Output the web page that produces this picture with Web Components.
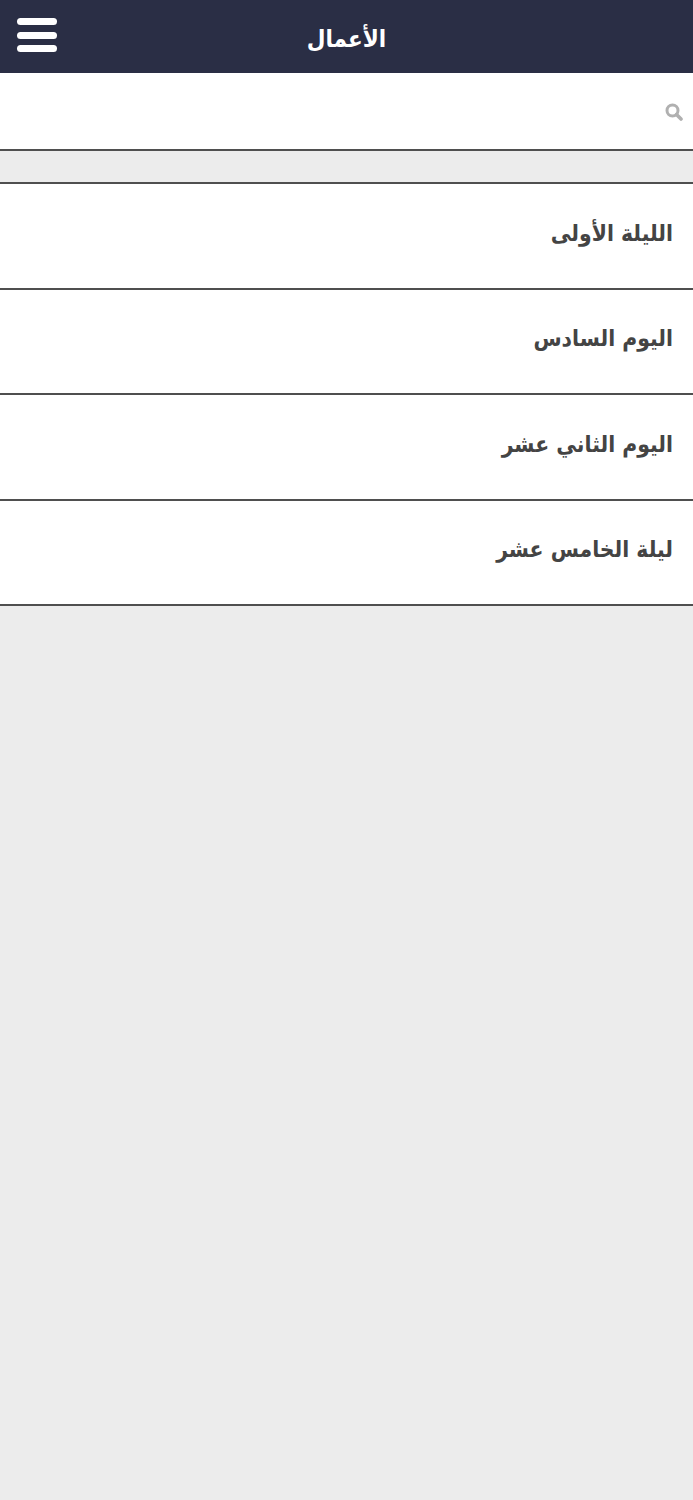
<!DOCTYPE html>
<html lang="ar"><head><meta charset="utf-8"><style>
html,body{margin:0;padding:0;background:#ececec;height:100%}
body{font-family:"DejaVu Sans",sans-serif;min-height:1500px}
</style></head><body>
<app-header title-text="الأعمال"></app-header>
<search-bar></search-bar>
<work-list>
<work-item>الليلة الأولى</work-item>
<work-item>اليوم السادس</work-item>
<work-item>اليوم الثاني عشر</work-item>
<work-item>ليلة الخامس عشر</work-item>
</work-list>
<script>
class AppHeader extends HTMLElement{constructor(){super();this.attachShadow({mode:'open'}).innerHTML=`<style>
:host{display:flex;height:73px;background:#2a2e45;align-items:center;justify-content:center;position:relative;color:#fff}
.t{font:700 24px "DejaVu Sans Condensed","DejaVu Sans",sans-serif;direction:rtl;padding-top:5px}
.m{position:absolute;left:17px;top:18px;width:40px;display:flex;flex-direction:column;gap:6.5px}
.m i{display:block;height:7px;background:#fff;border-radius:3.5px}
</style><div class="m"><i></i><i></i><i></i></div><div class="t">${this.getAttribute('title-text')}</div>`}}
customElements.define('app-header',AppHeader);
class SearchBar extends HTMLElement{constructor(){super();this.attachShadow({mode:'open'}).innerHTML=`<style>
:host{display:flex;height:76px;background:#fff;border-bottom:2px solid #4f4f4f;align-items:center;justify-content:flex-end;padding-right:10px;box-sizing:content-box}
svg{display:block;margin-top:2px}
</style><svg width="18" height="18" viewBox="0 0 18 18"><circle cx="7.5" cy="7.5" r="5.5" fill="none" stroke="#b0b0b0" stroke-width="3"/><path d="M11.5 11.5L16 16" stroke="#b0b0b0" stroke-width="3.6" stroke-linecap="round"/></svg>`}}
customElements.define('search-bar',SearchBar);
class WorkList extends HTMLElement{constructor(){super();this.attachShadow({mode:'open'}).innerHTML=`<style>
:host{display:block;margin-top:31px;border-top:2px solid #4f4f4f}
</style><slot></slot>`}}
customElements.define('work-list',WorkList);
class WorkItem extends HTMLElement{constructor(){super();this.attachShadow({mode:'open'}).innerHTML=`<style>
:host{display:flex;height:103.5px;background:#fff;border-bottom:2px solid #4f4f4f;align-items:center;direction:rtl;padding-right:20px;color:#444;font:700 22.7px "DejaVu Sans Condensed","DejaVu Sans",sans-serif}
span{display:block;padding-bottom:6px}
</style><span><slot></slot></span>`}}
customElements.define('work-item',WorkItem);
</script></body></html>
